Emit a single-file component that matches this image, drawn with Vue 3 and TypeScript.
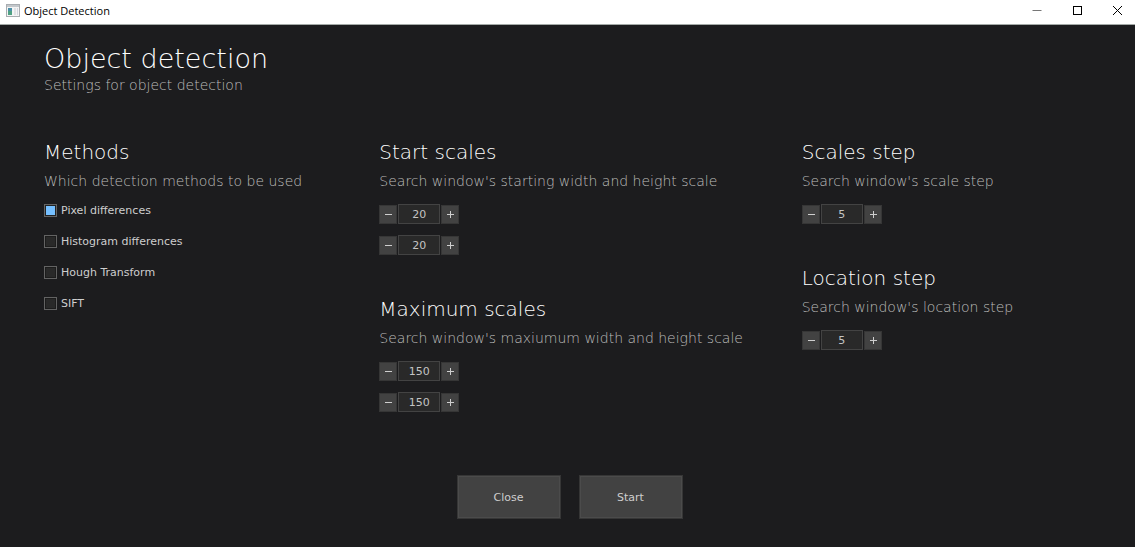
<script setup lang="ts">
import { reactive } from 'vue'

interface Method {
  id: string
  label: string
  enabled: boolean
}

interface Counter {
  id: string
  label: string
  value: number
}

interface Setting {
  title: string
  hint: string
  counters: Counter[]
}

const methods = reactive<Method[]>([
  { id: 'pixel', label: 'Pixel differences', enabled: true },
  { id: 'histogram', label: 'Histogram differences', enabled: false },
  { id: 'hough', label: 'Hough Transform', enabled: false },
  { id: 'sift', label: 'SIFT', enabled: false },
])

const columns = reactive<Setting[][]>([
  [
    {
      title: 'Start scales',
      hint: "Search window's starting width and height scale",
      counters: [
        { id: 'start-width', label: 'Start width scale', value: 20 },
        { id: 'start-height', label: 'Start height scale', value: 20 },
      ],
    },
    {
      title: 'Maximum scales',
      hint: "Search window's maxiumum width and height scale",
      counters: [
        { id: 'max-width', label: 'Maximum width scale', value: 150 },
        { id: 'max-height', label: 'Maximum height scale', value: 150 },
      ],
    },
  ],
  [
    {
      title: 'Scales step',
      hint: "Search window's scale step",
      counters: [{ id: 'scale-step', label: 'Scale step', value: 5 }],
    },
    {
      title: 'Location step',
      hint: "Search window's location step",
      counters: [{ id: 'location-step', label: 'Location step', value: 5 }],
    },
  ],
])
</script>

<template>
  <div class="window">
    <header class="titlebar">
      <svg class="app-icon" viewBox="0 0 14 13" aria-hidden="true">
        <rect x="0.5" y="0.5" width="13" height="12" fill="#f4f4f4" stroke="#a9adb1" />
        <rect x="1" y="1" width="12" height="2" fill="#c3c7cb" />
        <rect x="2" y="4" width="4" height="7" fill="#4b8fa8" />
        <rect x="2" y="7" width="4" height="4" fill="#4fa183" />
        <rect x="8" y="4" width="2" height="7" fill="#dfe2e5" />
        <rect x="11" y="4" width="1" height="7" fill="#d3d6e0" />
      </svg>
      <span class="caption">Object Detection</span>
      <button class="sys" type="button" aria-label="Minimize">
        <svg viewBox="0 0 10 10"><path d="M0.5 5.5H9.5" stroke="#777" /></svg>
      </button>
      <button class="sys" type="button" aria-label="Maximize">
        <svg viewBox="0 0 10 10"><rect x="1.5" y="1.5" width="8" height="8" stroke="#000" fill="none" /></svg>
      </button>
      <button class="sys" type="button" aria-label="Close window">
        <svg viewBox="0 0 10 10"><path d="M1 1L10 10M10 1L1 10" stroke="#000" /></svg>
      </button>
    </header>

    <main class="body">
      <h1>Object detection</h1>
      <p class="lead">Settings for object detection</p>

      <div class="columns">
        <div class="column">
          <section>
            <h2>Methods</h2>
            <p class="hint">Which detection methods to be used</p>
            <div class="checks">
              <label v-for="m in methods" :key="m.id" class="check">
                <input v-model="m.enabled" type="checkbox" />
                <span>{{ m.label }}</span>
              </label>
            </div>
          </section>
        </div>

        <div v-for="(column, i) in columns" :key="i" class="column">
          <section v-for="s in column" :key="s.title">
            <h2>{{ s.title }}</h2>
            <p class="hint">{{ s.hint }}</p>
            <div class="counters">
              <div v-for="c in s.counters" :key="c.id" class="counter">
                <button type="button" :aria-label="`Decrease ${c.label}`" @click="c.value--">
                  <svg viewBox="0 0 8 8"><path d="M1 4.5H8" /></svg>
                </button>
                <input v-model.number="c.value" type="text" inputmode="numeric" :aria-label="c.label" />
                <button type="button" :aria-label="`Increase ${c.label}`" @click="c.value++">
                  <svg viewBox="0 0 8 8"><path d="M1 4.5H8M4.5 1V8" /></svg>
                </button>
              </div>
            </div>
          </section>
        </div>
      </div>

      <footer class="actions">
        <button type="button">Close</button>
        <button type="button">Start</button>
      </footer>
    </main>
  </div>
</template>

<style>
body {
  margin: 0;
  background: #1c1c1e;
}
</style>

<style scoped>
.window {
  display: flex;
  flex-direction: column;
  min-height: 100vh;
  box-sizing: border-box;
  background: #1c1c1e;
  color: #cecece;
  font-family: "DejaVu Sans", sans-serif;
  font-weight: 200;
}

.titlebar {
  display: flex;
  align-items: center;
  height: 24px;
  padding-left: 6px;
  background: #fff;
  border-bottom: 1px solid #a4aaa7;
}

.app-icon {
  width: 14px;
  height: 13px;
  margin-bottom: 4px;
}

.caption {
  flex: 1;
  margin-left: 4px;
  color: #000;
  font: 400 11px/22px "Open Sans", sans-serif;
  padding-bottom: 2px;
}

.sys {
  display: flex;
  justify-content: center;
  width: 40px;
  padding: 0 0 4px;
  border: 0;
  background: none;
}

.sys:last-child {
  margin-right: -2px;
}

.sys svg {
  width: 10px;
  height: 10px;
  overflow: visible;
}

.body {
  display: flex;
  flex: 1;
  flex-direction: column;
  padding: 16px 0 28px 44px;
}

h1,
h2,
p {
  margin: 0;
  font-weight: 200;
}

h1 {
  color: #fff;
  font-size: 27px;
  line-height: 36px;
}

.lead,
.hint {
  color: #bcbcbc;
  font-size: 14px;
  line-height: 16px;
}

.columns {
  display: grid;
  grid-template-columns: 335fr 422fr 333fr;
  margin-top: 47px;
}

.column {
  display: flex;
  flex-direction: column;
  gap: 42px;
}

h2 {
  color: #fff;
  font-size: 20px;
  line-height: 24px;
}

.hint {
  margin-top: 9px;
}

.checks,
.counters {
  display: flex;
  flex-direction: column;
  margin-top: 15px;
}

.checks {
  gap: 18px;
}

.counters {
  gap: 11px;
}

.check {
  display: flex;
  align-items: center;
  gap: 4px;
  height: 13px;
  font-size: 11px;
  font-weight: 400;
}

.check input {
  appearance: none;
  width: 13px;
  height: 13px;
  margin: 0;
  border: 1px solid #636363;
  background: #292929;
  box-shadow: inset 0 0 0 1px #1c1c1c;
}

.check input:checked {
  border-color: #636363;
  background: #75bfff;
  box-shadow: inset 0 0 0 1px #222;
}

.counter {
  display: flex;
  align-items: center;
  gap: 1px;
}

.counter button {
  display: flex;
  align-items: center;
  justify-content: center;
  width: 18px;
  height: 19px;
  padding: 0;
  border: 1px solid #363636;
  background: #424242;
}

.counter svg {
  width: 8px;
  height: 8px;
  overflow: visible;
  fill: none;
  stroke: #cecece;
}

.counter input {
  box-sizing: border-box;
  width: 42px;
  height: 20px;
  padding: 0;
  border: 1px solid #434343;
  background: #292929;
  color: #c4c4c4;
  font: 400 11px/18px "DejaVu Sans", sans-serif;
  text-align: center;
}

.actions {
  display: flex;
  justify-content: center;
  gap: 18px;
  margin-top: auto;
  padding-right: 40px;
}

.actions button {
  width: 104px;
  height: 44px;
  padding: 1px 0 0;
  border: 1px solid #363636;
  outline: 1px solid #4b4b4b;
  outline-offset: -2px;
  background: #424242;
  color: #cecece;
  font: 400 11px/16px "DejaVu Sans", sans-serif;
}
</style>
